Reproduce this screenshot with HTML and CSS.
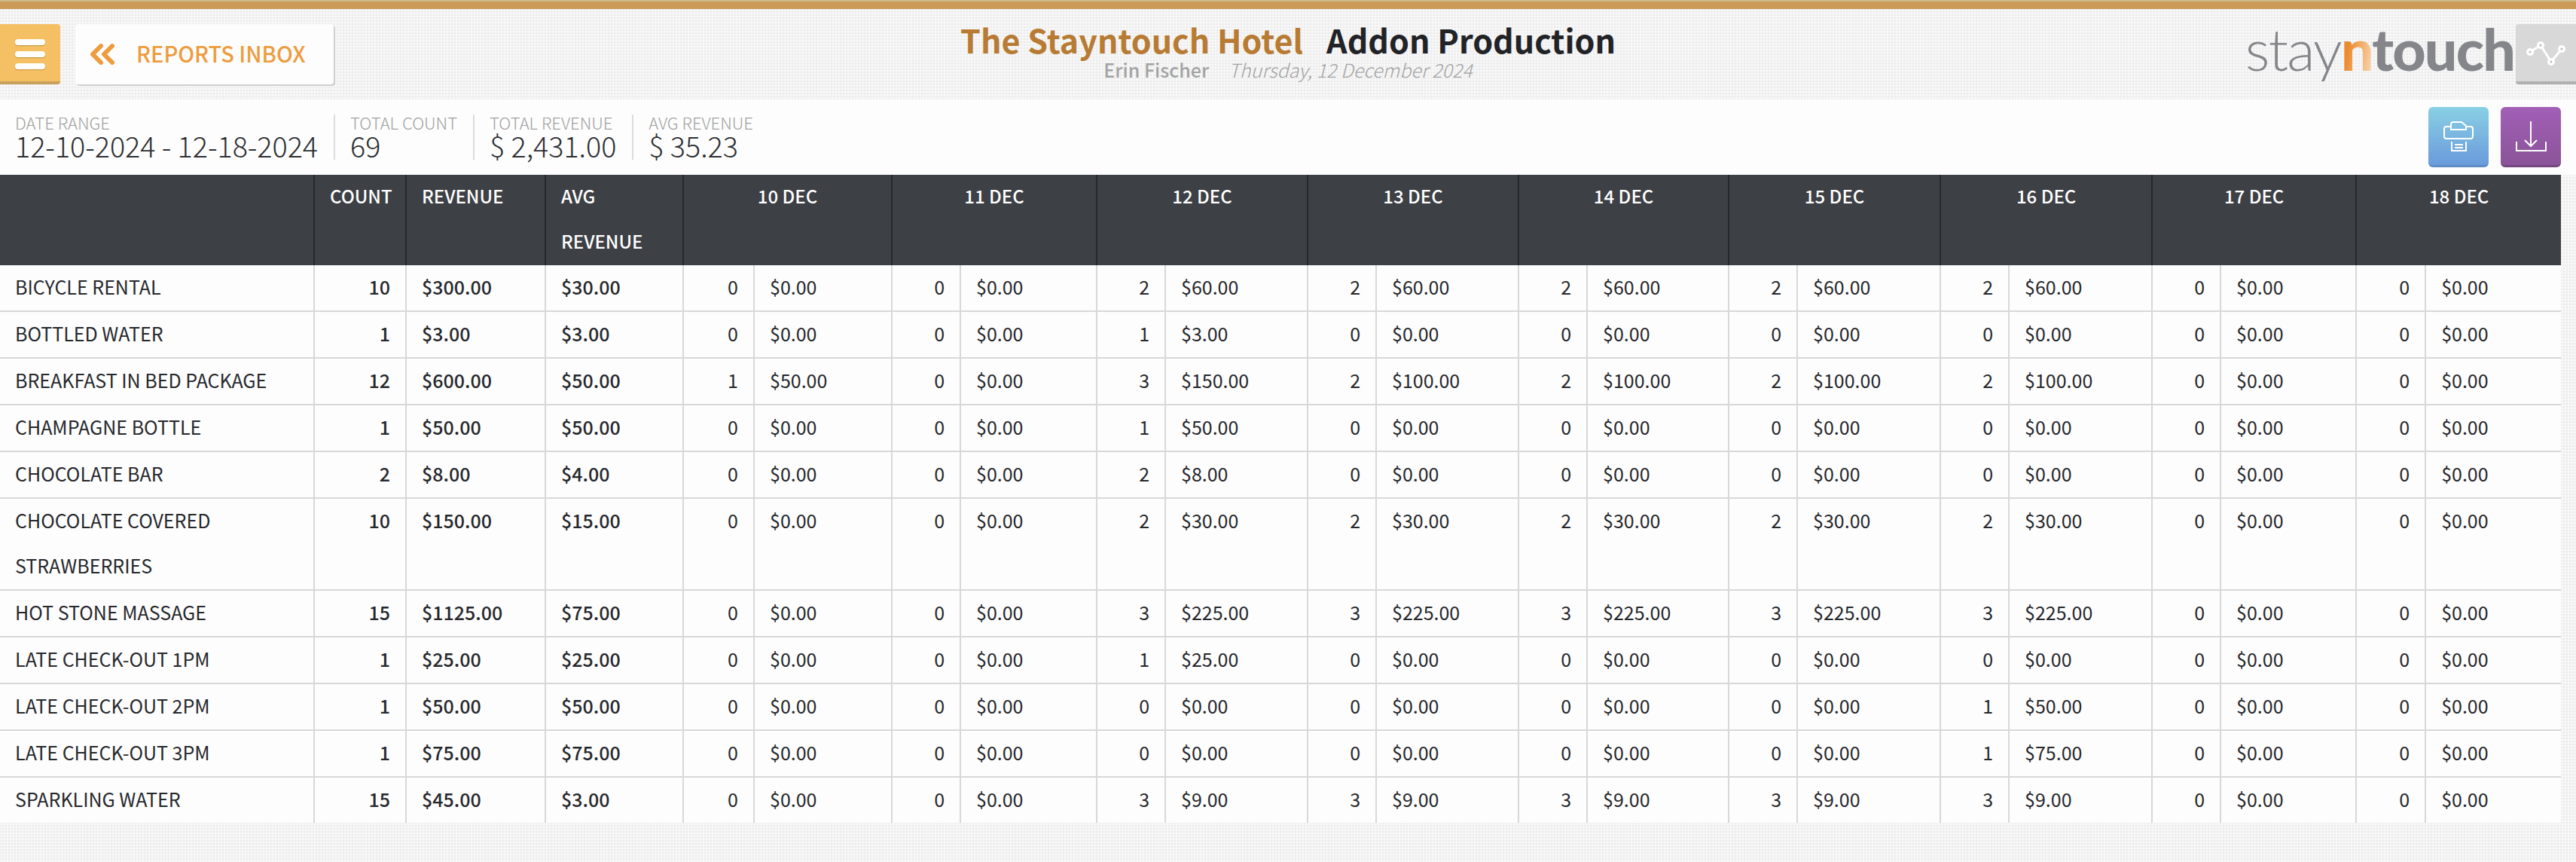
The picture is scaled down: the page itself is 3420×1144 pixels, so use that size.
FILE: index.html
```html
<!DOCTYPE html>
<html lang="en">
<head>
    <meta charset="UTF-8">
    <title>Addon Production</title>
    <link rel="stylesheet" href="styles.css">
</head>
<body>
    <div class="top-stripe"></div>

    <header class="page-header">
        <div class="header-left">
            <button class="menu-btn">
                <span class="menu-bar"></span>
                <span class="menu-bar"></span>
                <span class="menu-bar"></span>
            </button>
            <a class="back-btn">
                <svg class="back-icon" width="32" height="28" viewBox="0 0 32 28"><path d="M14 3 3 14l11 11M29 3 18 14l11 11"/></svg>
                <span class="back-label">REPORTS INBOX</span>
            </a>
        </div>
        <div class="header-title">
            <h1><span class="hotel-name">The Stayntouch Hotel</span><span class="report-name">Addon Production</span></h1>
            <p><span class="user-name">Erin Fischer</span><span class="today">Thursday, 12 December 2024</span></p>
        </div>
        <div class="header-right">
            <div class="logo"><span class="logo-thin">stay</span><span class="logo-n">n</span><span class="logo-bold">touch</span></div>
            <button class="graph-btn">
                <svg width="60" height="40" viewBox="0 0 60 40"><path class="graph-line" d="M9 19 23 10l14 22 14-17"/><circle cx="9" cy="19" r="5"/><circle cx="23" cy="10" r="5"/><circle cx="37" cy="32" r="5"/><circle cx="51" cy="15" r="5"/><circle class="graph-dot" cx="9" cy="19" r="1.5"/><circle class="graph-dot" cx="23" cy="10" r="1.5"/><circle class="graph-dot" cx="37" cy="32" r="1.5"/><circle class="graph-dot" cx="51" cy="15" r="1.5"/></svg>
            </button>
        </div>
    </header>

    <section class="summary">
        <div class="stat stat-first"><span class="stat-label">DATE RANGE</span><span class="stat-value">12-10-2024 - 12-18-2024</span></div>
        <div class="stat"><span class="stat-label">TOTAL COUNT</span><span class="stat-value">69</span></div>
        <div class="stat"><span class="stat-label">TOTAL REVENUE</span><span class="stat-value">$ 2,431.00</span></div>
        <div class="stat"><span class="stat-label">AVG REVENUE</span><span class="stat-value">$ 35.23</span></div>
        <div class="actions">
            <button class="action-btn print-btn">
                <svg width="44" height="42" viewBox="0 0 44 42"><path d="M12 8H6a3 3 0 0 0-3 3v10a3 3 0 0 0 3 3h32a3 3 0 0 0 3-3V11a3 3 0 0 0-3-3h-6M12 12V5a3 3 0 0 1 3-3h11l6 5v5zM13 28v12h19V28M17 32h11M17 36h11"/></svg>
            </button>
            <button class="action-btn download-btn">
                <svg width="44" height="42" viewBox="0 0 44 42"><path d="M22 1v33M14 26l8 8 8-8M3 28v12h39V28"/></svg>
            </button>
        </div>
    </section>

    <table class="report">
        <colgroup>
            <col class="c-name"><col class="c-count"><col class="c-rev"><col class="c-avg">
            <col class="d0a"><col class="d0b">
            <col class="d1a"><col class="d1b">
            <col class="d1a"><col class="d2b">
            <col class="d1a"><col class="d2b">
            <col class="d1a"><col class="d3b">
            <col class="d1a"><col class="d5b">
            <col class="d1a"><col class="d5b">
            <col class="d1a"><col class="d4b">
            <col class="d0c"><col class="d4b">
        </colgroup>
        <thead>
            <tr>
                <th></th><th class="num">COUNT</th><th>REVENUE</th><th>AVG<span class="second-line">REVENUE</span></th>
                <th colspan="2" class="day">10 DEC</th><th colspan="2" class="day">11 DEC</th><th colspan="2" class="day">12 DEC</th>
                <th colspan="2" class="day">13 DEC</th><th colspan="2" class="day">14 DEC</th><th colspan="2" class="day">15 DEC</th>
                <th colspan="2" class="day">16 DEC</th><th colspan="2" class="day">17 DEC</th><th colspan="2" class="day">18 DEC</th>
            </tr>
        </thead>
        <tbody>
            <tr><td>BICYCLE RENTAL</td><td class="num total">10</td><td class="total">$300.00</td><td class="total">$30.00</td><td class="num">0</td><td>$0.00</td><td class="num">0</td><td>$0.00</td><td class="num">2</td><td>$60.00</td><td class="num">2</td><td>$60.00</td><td class="num">2</td><td>$60.00</td><td class="num">2</td><td>$60.00</td><td class="num">2</td><td>$60.00</td><td class="num">0</td><td>$0.00</td><td class="num">0</td><td>$0.00</td></tr>
            <tr><td>BOTTLED WATER</td><td class="num total">1</td><td class="total">$3.00</td><td class="total">$3.00</td><td class="num">0</td><td>$0.00</td><td class="num">0</td><td>$0.00</td><td class="num">1</td><td>$3.00</td><td class="num">0</td><td>$0.00</td><td class="num">0</td><td>$0.00</td><td class="num">0</td><td>$0.00</td><td class="num">0</td><td>$0.00</td><td class="num">0</td><td>$0.00</td><td class="num">0</td><td>$0.00</td></tr>
            <tr><td>BREAKFAST IN BED PACKAGE</td><td class="num total">12</td><td class="total">$600.00</td><td class="total">$50.00</td><td class="num">1</td><td>$50.00</td><td class="num">0</td><td>$0.00</td><td class="num">3</td><td>$150.00</td><td class="num">2</td><td>$100.00</td><td class="num">2</td><td>$100.00</td><td class="num">2</td><td>$100.00</td><td class="num">2</td><td>$100.00</td><td class="num">0</td><td>$0.00</td><td class="num">0</td><td>$0.00</td></tr>
            <tr><td>CHAMPAGNE BOTTLE</td><td class="num total">1</td><td class="total">$50.00</td><td class="total">$50.00</td><td class="num">0</td><td>$0.00</td><td class="num">0</td><td>$0.00</td><td class="num">1</td><td>$50.00</td><td class="num">0</td><td>$0.00</td><td class="num">0</td><td>$0.00</td><td class="num">0</td><td>$0.00</td><td class="num">0</td><td>$0.00</td><td class="num">0</td><td>$0.00</td><td class="num">0</td><td>$0.00</td></tr>
            <tr><td>CHOCOLATE BAR</td><td class="num total">2</td><td class="total">$8.00</td><td class="total">$4.00</td><td class="num">0</td><td>$0.00</td><td class="num">0</td><td>$0.00</td><td class="num">2</td><td>$8.00</td><td class="num">0</td><td>$0.00</td><td class="num">0</td><td>$0.00</td><td class="num">0</td><td>$0.00</td><td class="num">0</td><td>$0.00</td><td class="num">0</td><td>$0.00</td><td class="num">0</td><td>$0.00</td></tr>
            <tr><td>CHOCOLATE COVERED<span class="second-line">STRAWBERRIES</span></td><td class="num total">10</td><td class="total">$150.00</td><td class="total">$15.00</td><td class="num">0</td><td>$0.00</td><td class="num">0</td><td>$0.00</td><td class="num">2</td><td>$30.00</td><td class="num">2</td><td>$30.00</td><td class="num">2</td><td>$30.00</td><td class="num">2</td><td>$30.00</td><td class="num">2</td><td>$30.00</td><td class="num">0</td><td>$0.00</td><td class="num">0</td><td>$0.00</td></tr>
            <tr><td>HOT STONE MASSAGE</td><td class="num total">15</td><td class="total">$1125.00</td><td class="total">$75.00</td><td class="num">0</td><td>$0.00</td><td class="num">0</td><td>$0.00</td><td class="num">3</td><td>$225.00</td><td class="num">3</td><td>$225.00</td><td class="num">3</td><td>$225.00</td><td class="num">3</td><td>$225.00</td><td class="num">3</td><td>$225.00</td><td class="num">0</td><td>$0.00</td><td class="num">0</td><td>$0.00</td></tr>
            <tr><td>LATE CHECK-OUT 1PM</td><td class="num total">1</td><td class="total">$25.00</td><td class="total">$25.00</td><td class="num">0</td><td>$0.00</td><td class="num">0</td><td>$0.00</td><td class="num">1</td><td>$25.00</td><td class="num">0</td><td>$0.00</td><td class="num">0</td><td>$0.00</td><td class="num">0</td><td>$0.00</td><td class="num">0</td><td>$0.00</td><td class="num">0</td><td>$0.00</td><td class="num">0</td><td>$0.00</td></tr>
            <tr><td>LATE CHECK-OUT 2PM</td><td class="num total">1</td><td class="total">$50.00</td><td class="total">$50.00</td><td class="num">0</td><td>$0.00</td><td class="num">0</td><td>$0.00</td><td class="num">0</td><td>$0.00</td><td class="num">0</td><td>$0.00</td><td class="num">0</td><td>$0.00</td><td class="num">0</td><td>$0.00</td><td class="num">1</td><td>$50.00</td><td class="num">0</td><td>$0.00</td><td class="num">0</td><td>$0.00</td></tr>
            <tr><td>LATE CHECK-OUT 3PM</td><td class="num total">1</td><td class="total">$75.00</td><td class="total">$75.00</td><td class="num">0</td><td>$0.00</td><td class="num">0</td><td>$0.00</td><td class="num">0</td><td>$0.00</td><td class="num">0</td><td>$0.00</td><td class="num">0</td><td>$0.00</td><td class="num">0</td><td>$0.00</td><td class="num">1</td><td>$75.00</td><td class="num">0</td><td>$0.00</td><td class="num">0</td><td>$0.00</td></tr>
            <tr><td>SPARKLING WATER</td><td class="num total">15</td><td class="total">$45.00</td><td class="total">$3.00</td><td class="num">0</td><td>$0.00</td><td class="num">0</td><td>$0.00</td><td class="num">3</td><td>$9.00</td><td class="num">3</td><td>$9.00</td><td class="num">3</td><td>$9.00</td><td class="num">3</td><td>$9.00</td><td class="num">3</td><td>$9.00</td><td class="num">0</td><td>$0.00</td><td class="num">0</td><td>$0.00</td></tr>
        </tbody>
    </table>
</body>
</html>
```

FILE: styles.css
```css
* { box-sizing: border-box; }

body {
    margin: 0;
    min-height: 1144px;
    overflow: hidden;
    font-family: "Noto Sans CJK SC", "Open Sans", sans-serif;
    color: #26282c;
    background-color: #f3f3f3;
    background-image: radial-gradient(#fafafa 1px, transparent 1px), radial-gradient(#ececec 1px, transparent 1px);
    background-size: 4px 4px;
    background-position: 0 0, 2px 2px;
}

button { border: none; padding: 0; font: inherit; }

.top-stripe {
    height: 12px;
    background-color: #cb9a58;
    border-top: 2px solid #cdbb8a;
}

/* Cabecera */
.page-header {
    display: grid;
    grid-template-columns: 1fr auto 1fr;
    height: 120px;
}

.header-left { display: flex; gap: 20px; padding-top: 20px; }

.menu-btn {
    display: flex;
    flex-direction: column;
    justify-content: center;
    gap: 8px;
    width: 80px;
    height: 80px;
    padding: 4px 20px 0;
    background-color: #f4c063;
    border-bottom: 4px solid #c9a05a;
    border-radius: 0 4px 4px 0;
}

.menu-bar {
    display: block;
    height: 8px;
    background-color: #fff;
    border-radius: 4px;
    box-shadow: 0 1px 1px rgba(150, 100, 30, 0.5);
}

.back-btn {
    display: flex;
    align-items: center;
    width: 343px;
    height: 80px;
    padding: 0 20px;
    background-color: #fdfdfd;
    border-radius: 4px;
    box-shadow: 2px 2px 0 #cfcfcf;
    color: #ee9c3e;
    font-size: 29px;
    font-weight: 500;
}

.back-icon { margin-right: 29px; fill: none; stroke: #ee9c3e; stroke-width: 6; stroke-linecap: round; stroke-linejoin: round; }
.back-label { margin-bottom: 5px; }

.header-title { text-align: center; padding-top: 10px; }

.header-title h1 { margin: 0; font-size: 43px; line-height: 60px; font-weight: 700; }
.hotel-name { color: #b87b33; margin-right: 31px; }
.report-name { color: #222327; }

.header-title p { margin: 0; font-size: 25px; line-height: 20px; color: #a3a3a3; }
.user-name { font-weight: 500; margin-right: 26px; }
.today { font-style: italic; font-weight: 300; }

.header-right { display: flex; justify-content: flex-end; align-items: flex-start; padding-top: 20px; }

.logo { font-family: Lato, sans-serif; font-size: 77px; line-height: 65px; letter-spacing: -1.8px; color: #85868a; margin-right: 2px; }
.logo-thin { font-weight: 300; }
.logo-bold { font-weight: 900; }
.logo-n {
    font-weight: 900;
    color: transparent;
    background: linear-gradient(100deg, #ec8a2e 30%, #f9dcb8 100%);
    -webkit-background-clip: text;
    background-clip: text;
}

.graph-btn {
    display: flex;
    align-items: center;
    justify-content: center;
    width: 80px;
    height: 80px;
    background-color: #d8d8d8;
    border-bottom: 4px solid #b0b0b0;
    border-radius: 4px 0 0 4px;
}
.graph-btn circle { fill: #fff; }
.graph-btn .graph-dot { fill: #bbb; }
.graph-line { fill: none; stroke: #fff; stroke-width: 3; }

/* Resumen */
.summary {
    display: flex;
    align-items: center;
    height: 100px;
    padding: 0 20px;
    background-color: #fdfdfd;
}

.stat {
    display: flex;
    flex-direction: column;
    height: 60px;
    padding: 0 21px 0 20px;
    border-left: 2px solid #dcdcdc;
}

.stat-first { border-left: none; padding-left: 0; }

.stat-label { margin-top: -2px; font-size: 22px; line-height: 25px; font-weight: 300; color: #a0a0a0; }
.stat-value { font-size: 37.7px; line-height: 36px; font-weight: 300; color: #2c2e32; white-space: nowrap; }

.actions { display: flex; gap: 16px; margin-left: auto; }

.action-btn {
    display: flex;
    align-items: center;
    justify-content: center;
    width: 80px;
    height: 80px;
    border-radius: 6px;
}
.action-btn svg { fill: none; stroke: #fff; stroke-width: 2; }
.print-btn { background: linear-gradient(#89d0e4, #6a9bdc); border-bottom: 3px solid #5d8cc4; }
.download-btn { background: linear-gradient(#a25fb6, #8a5499); border-bottom: 3px solid #74457f; }

/* Tabla */
.report {
    width: 3400px;
    table-layout: fixed;
    border-collapse: collapse;
    font-size: 25px;
    line-height: 56px;
    background-color: #fdfdfd;
}

.c-name { width: 417px; }
.c-count { width: 122px; }
.c-rev { width: 185px; }
.c-avg { width: 183px; }
.d0a { width: 94px; }
.d0b { width: 183px; }
.d0c { width: 92px; }
.d1a { width: 91px; }
.d1b { width: 181px; }
.d2b { width: 189px; }
.d3b { width: 188px; }
.d4b { width: 180px; }
.d5b { width: 190px; }

.report th, .report td {
    padding: 0 20px 4px;
    text-align: left;
    vertical-align: top;
    white-space: nowrap;
}

.second-line { display: block; margin-top: 4px; }

.report th {
    height: 120px;
    background-color: #3d4045;
    color: #fff;
    font-size: 24px;
    font-weight: 500;
    border-left: 2px solid #25282c;
}
.report th:first-child, .report td:first-child { border-left: none; }

.report td {
    font-weight: 400;
    border-left: 2px solid #d8d8d8;
    border-bottom: 2px solid #d8d8d8;
}

.report tbody tr:last-child td { border-bottom: none; }

.report .num { text-align: right; }
.report .day { text-align: center; }
.report .total { font-weight: 500; }
```
